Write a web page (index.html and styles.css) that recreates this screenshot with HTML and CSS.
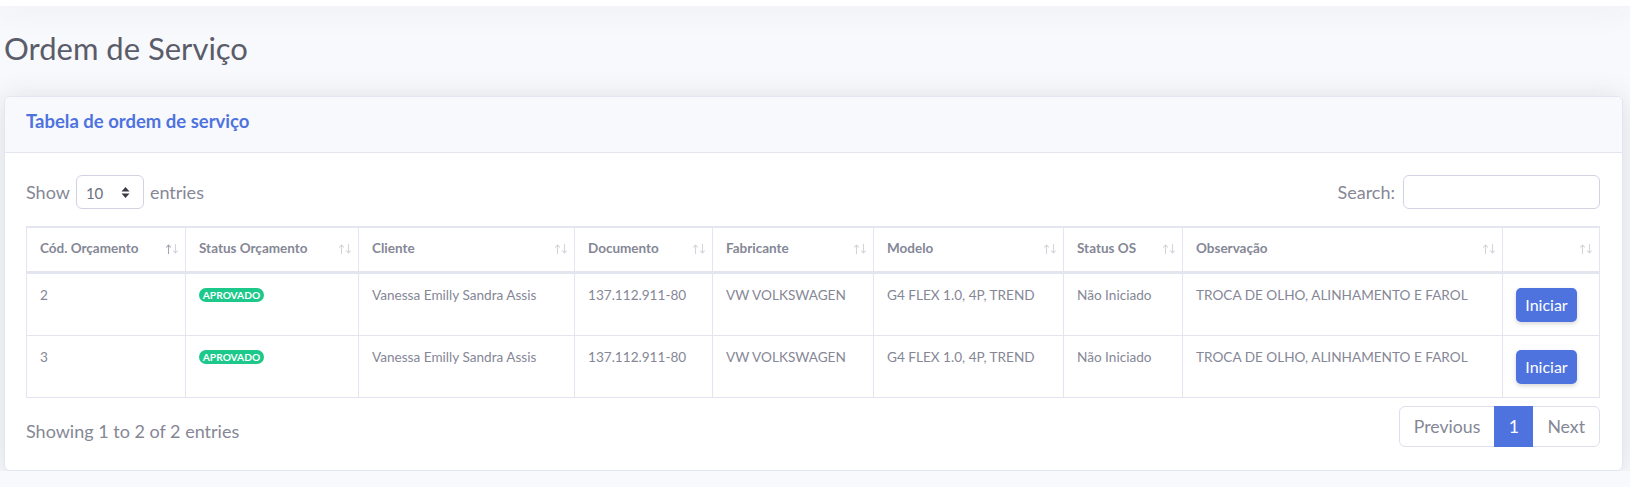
FILE: index.html
```html
<!DOCTYPE html>
<html lang="pt-BR">
<head>
<meta charset="utf-8">
<title>Ordem de Serviço</title>
<link rel="stylesheet" href="styles.css">
</head>
<body>
<div class="topbar"></div>
<main class="page">
  <h1 class="page-title">Ordem de Serviço</h1>
  <section class="card">
    <header class="card-header">
      <h6 class="card-title">Tabela de ordem de serviço</h6>
    </header>
    <div class="card-body">
      <div class="controls">
        <label class="length">
          <span>Show</span>
          <span class="select">
            <span class="select-value">10</span>
            <svg class="select-arrows" width="9" height="13" viewBox="0 0 9 13"><path d="M0.5 5.5 L4.5 1 L8.5 5.5 Z M0.5 7.5 L4.5 12 L8.5 7.5 Z" fill="#3a3b45"/></svg>
          </span>
          <span>entries</span>
        </label>
        <label class="search">
          <span>Search:</span>
          <input class="search-input" type="search">
        </label>
      </div>

      <table class="data-table">
        <thead>
          <tr>
            <th class="w1"><div class="th-in"><span>Cód. Orçamento</span><svg class="sort" width="12" height="10" viewBox="0 0 12 10"><path class="up on" d="M2.5 10V1M0.3 3.4L2.5 1L4.7 3.4"/><path class="down" d="M9.5 0V9M7.3 6.6L9.5 9L11.7 6.6"/></svg></div></th>
            <th class="w2"><div class="th-in"><span>Status Orçamento</span><svg class="sort" width="12" height="10" viewBox="0 0 12 10"><path class="up" d="M2.5 10V1M0.3 3.4L2.5 1L4.7 3.4"/><path class="down" d="M9.5 0V9M7.3 6.6L9.5 9L11.7 6.6"/></svg></div></th>
            <th class="w3"><div class="th-in"><span>Cliente</span><svg class="sort" width="12" height="10" viewBox="0 0 12 10"><path class="up" d="M2.5 10V1M0.3 3.4L2.5 1L4.7 3.4"/><path class="down" d="M9.5 0V9M7.3 6.6L9.5 9L11.7 6.6"/></svg></div></th>
            <th class="w4"><div class="th-in"><span>Documento</span><svg class="sort" width="12" height="10" viewBox="0 0 12 10"><path class="up" d="M2.5 10V1M0.3 3.4L2.5 1L4.7 3.4"/><path class="down" d="M9.5 0V9M7.3 6.6L9.5 9L11.7 6.6"/></svg></div></th>
            <th class="w5"><div class="th-in"><span>Fabricante</span><svg class="sort" width="12" height="10" viewBox="0 0 12 10"><path class="up" d="M2.5 10V1M0.3 3.4L2.5 1L4.7 3.4"/><path class="down" d="M9.5 0V9M7.3 6.6L9.5 9L11.7 6.6"/></svg></div></th>
            <th class="w6"><div class="th-in"><span>Modelo</span><svg class="sort" width="12" height="10" viewBox="0 0 12 10"><path class="up" d="M2.5 10V1M0.3 3.4L2.5 1L4.7 3.4"/><path class="down" d="M9.5 0V9M7.3 6.6L9.5 9L11.7 6.6"/></svg></div></th>
            <th class="w7"><div class="th-in"><span>Status OS</span><svg class="sort" width="12" height="10" viewBox="0 0 12 10"><path class="up" d="M2.5 10V1M0.3 3.4L2.5 1L4.7 3.4"/><path class="down" d="M9.5 0V9M7.3 6.6L9.5 9L11.7 6.6"/></svg></div></th>
            <th class="w8"><div class="th-in"><span>Observação</span><svg class="sort" width="12" height="10" viewBox="0 0 12 10"><path class="up" d="M2.5 10V1M0.3 3.4L2.5 1L4.7 3.4"/><path class="down" d="M9.5 0V9M7.3 6.6L9.5 9L11.7 6.6"/></svg></div></th>
            <th class="w9"><div class="th-in"><span></span><svg class="sort" width="12" height="10" viewBox="0 0 12 10"><path class="up" d="M2.5 10V1M0.3 3.4L2.5 1L4.7 3.4"/><path class="down" d="M9.5 0V9M7.3 6.6L9.5 9L11.7 6.6"/></svg></div></th>
          </tr>
        </thead>
        <tbody>
          <tr>
            <td>2</td>
            <td><span class="badge">APROVADO</span></td>
            <td>Vanessa Emilly Sandra Assis</td>
            <td>137.112.911-80</td>
            <td>VW VOLKSWAGEN</td>
            <td>G4 FLEX 1.0, 4P, TREND</td>
            <td>Não Iniciado</td>
            <td>TROCA DE OLHO, ALINHAMENTO E FAROL</td>
            <td><button class="btn" type="button">Iniciar</button></td>
          </tr>
          <tr>
            <td>3</td>
            <td><span class="badge">APROVADO</span></td>
            <td>Vanessa Emilly Sandra Assis</td>
            <td>137.112.911-80</td>
            <td>VW VOLKSWAGEN</td>
            <td>G4 FLEX 1.0, 4P, TREND</td>
            <td>Não Iniciado</td>
            <td>TROCA DE OLHO, ALINHAMENTO E FAROL</td>
            <td><button class="btn" type="button">Iniciar</button></td>
          </tr>
        </tbody>
      </table>

      <div class="footer">
        <div class="info">Showing 1 to 2 of 2 entries</div>
        <ul class="pagination">
          <li class="page-item disabled">Previous</li>
          <li class="page-item active">1</li>
          <li class="page-item disabled">Next</li>
        </ul>
      </div>
    </div>
  </section>
</main>
</body>
</html>
```
FILE: styles.css
```css
* { box-sizing: border-box; }

html, body {
  margin: 0;
  padding: 0;
}

body {
  background: #f8f9fc;
  font-family: "Lato", "Noto Sans", sans-serif;
  color: #858796;
  overflow: hidden;
}

.topbar {
  height: 6px;
  background: #fff;
  box-shadow: 0 0.15rem 1.75rem 0 rgba(58, 59, 69, 0.15);
  position: relative;
  z-index: 1;
}

.page {
  padding: 0 7px 0 4px;
}

.page-title {
  margin: 24px 0 29px;
  font-size: 31px;
  line-height: 37px;
  font-weight: 400;
  color: #5a5c69;
}

.card {
  background: #fff;
  border: 1px solid #e3e6f0;
  border-radius: 6px;
  box-shadow: 0 0.15rem 1.75rem 0 rgba(58, 59, 69, 0.15);
  overflow: hidden;
}

.card-header {
  background: #f8f9fc;
  border-bottom: 1px solid #e3e6f0;
  padding: 11px 21px 17px;
}

.card-title {
  margin: 0;
  font-size: 18.5px;
  line-height: 27px;
  font-weight: 700;
  color: #4e73df;
}

.card-body {
  padding: 22px 22px 23px 21px;
}

.controls {
  display: flex;
  justify-content: space-between;
  align-items: center;
  height: 34px;
  font-size: 18px;
}

.length, .search {
  display: flex;
  align-items: center;
}

.length { gap: 6px; }
.search { gap: 8px; }

.select {
  display: flex;
  align-items: center;
  justify-content: space-between;
  width: 68px;
  height: 34px;
  border: 1px solid #d1d3e2;
  border-radius: 6px;
  padding: 2px 13px 0 9px;
  font-size: 15px;
  color: #6e707e;
  background: #fff;
}

.select-arrows { display: block; margin-top: -2px; }

.search-input {
  width: 197px;
  height: 34px;
  border: 1px solid #d1d3e2;
  border-radius: 6px;
  background: #fff;
  font: inherit;
  padding: 0 10px;
  outline: none;
}

.data-table {
  width: 1574px;
  margin-top: 17px;
  table-layout: fixed;
  border-collapse: separate;
  border-spacing: 0;
}

.w1 { width: 160px; }
.w2 { width: 173px; }
.w3 { width: 216px; }
.w4 { width: 138px; }
.w5 { width: 161px; }
.w6 { width: 190px; }
.w7 { width: 119px; }
.w8 { width: 320px; }
.w9 { width: 97px; }

.data-table th {
  border-top: 2px solid #e3e6f0;
  border-bottom: 3px solid #e3e6f0;
  border-right: 1px solid #e3e6f0;
  padding: 10px 7px 12px 13px;
  font-size: 13.5px;
  line-height: 21px;
  font-weight: 700;
  color: #858796;
  text-align: left;
  vertical-align: top;
}

.data-table th:first-child,
.data-table td:first-child {
  border-left: 1px solid #e3e6f0;
}

.th-in {
  display: flex;
  justify-content: space-between;
  align-items: center;
  min-height: 21px;
  white-space: nowrap;
}

.sort {
  display: block;
  flex: none;
  margin-top: 1px;
}

.sort path {
  fill: none;
  stroke: #858796;
  stroke-width: 1.1;
  opacity: 0.35;
}

.sort path.on { opacity: 0.75; }

.data-table td {
  border-bottom: 1px solid #e3e6f0;
  border-right: 1px solid #e3e6f0;
  padding: 11px 13px 13px;
  font-size: 13.6px;
  line-height: 20px;
  color: #858796;
  vertical-align: top;
  white-space: nowrap;
}

.badge {
  display: inline-block;
  vertical-align: top;
  margin-top: 3px;
  height: 14px;
  padding: 0 3.8px;
  border-radius: 7px;
  background: #1cc88a;
  color: #fff;
  font-size: 10.2px;
  line-height: 14px;
  font-weight: 700;
}

.btn {
  display: block;
  margin-top: 3px;
  height: 34px;
  width: 61px;
  padding: 0;
  border: 0;
  border-radius: 5px;
  background: #4e73df;
  color: #fff;
  font-family: inherit;
  font-size: 16px;
  line-height: 34px;
  box-shadow: 0 0.125rem 0.25rem 0 rgba(58, 59, 69, 0.2);
}

.footer {
  display: flex;
  justify-content: space-between;
  align-items: flex-start;
  margin-top: 8px;
}

.info {
  padding-top: 12px;
  font-size: 18px;
  line-height: 27px;
}

.pagination {
  display: flex;
  margin: 0;
  padding: 0;
  list-style: none;
  border: 1px solid #dddfeb;
  border-radius: 6px;
  font-size: 17.7px;
}

.page-item {
  height: 39px;
  line-height: 39px;
  padding: 0 14px;
  color: #858796;
}

.page-item.active {
  margin: -1px 0;
  height: 41px;
  line-height: 41px;
  width: 39px;
  padding: 0;
  text-align: center;
  background: #4e73df;
  color: #fff;
}
```
